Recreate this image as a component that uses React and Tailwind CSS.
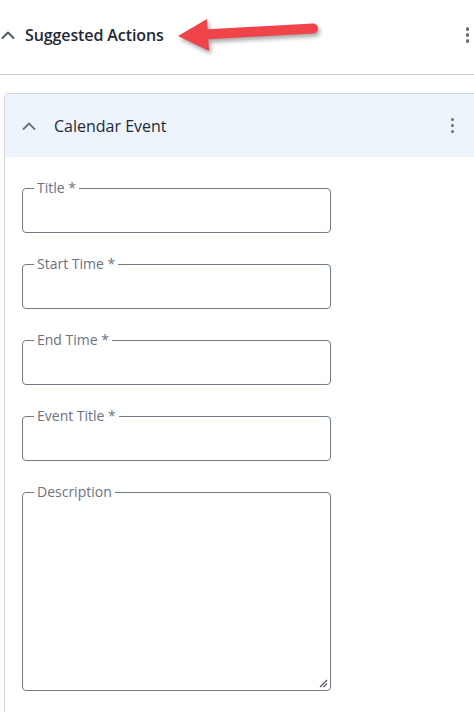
import React from "react";

function Chevron({ className }) {
  return (
    <svg width="14" height="8" viewBox="0 0 14 8" className={className} fill="none">
      <path d="M1.5 7 L7 1.5 L12.5 7" stroke="currentColor" strokeWidth="1.8" strokeLinecap="round" strokeLinejoin="round" />
    </svg>
  );
}

function Kebab({ className }) {
  return (
    <div className={"flex flex-col items-center gap-[2.5px] " + className}>
      <span className="block w-[3.5px] h-[3.5px] rounded-full bg-[#5f6f82]" />
      <span className="block w-[3.5px] h-[3.5px] rounded-full bg-[#5f6f82]" />
      <span className="block w-[3.5px] h-[3.5px] rounded-full bg-[#5f6f82]" />
    </div>
  );
}

function Field({ label, tall }) {
  return (
    <div
      className={
        "relative w-[309px] border border-[#6e7a88] rounded-[4px] " +
        (tall ? "h-[199px]" : "h-[45px]")
      }
    >
      <span className="absolute left-[11px] top-[-9px] px-[3px] bg-white text-[14px] leading-[16px] text-[#6b7280]">
        {label}
      </span>
      {tall && (
        <svg className="absolute right-[2px] bottom-[2px]" width="9" height="9" viewBox="0 0 9 9">
          <path d="M1 8 L8 1 M4.5 8 L8 4.5" stroke="#555" strokeWidth="1.2" />
        </svg>
      )}
    </div>
  );
}

export default function App() {
  return (
    <div
      className="relative w-[474px] h-[712px] overflow-hidden bg-white"
      style={{ fontFamily: '"Open Sans", sans-serif' }}
    >
      <div className="h-[75px] pb-[4px] border-b border-[#c6cbd2] flex items-center">
        <Chevron className="ml-[1px] text-[#4b5563]" />
        <span className="ml-[10px] text-[16px] font-semibold text-[#1f2937] tracking-[-0.1px]">Suggested Actions</span>
        <Kebab className="ml-auto mr-[5px]" />
      </div>

      <div className="ml-[4px] mt-[18px] w-[490px] border border-[#d3d7dd] rounded-tl-[4px]">
        <div className="h-[63px] bg-[#eef4fc] flex items-center">
          <Chevron className="ml-[17px] text-[#6b7280]" />
          <span className="ml-[18px] text-[16px] text-[#1f2937]">Calendar Event</span>
          <Kebab className="ml-[284px]" />
        </div>
        <div className="pl-[17px] pt-[31px] pb-[40px] flex flex-col gap-[31px]">
          <Field label="Title *" />
          <Field label="Start Time *" />
          <Field label="End Time *" />
          <Field label="Event Title *" />
          <Field label="Description" tall />
        </div>
      </div>

      <svg
        className="absolute left-0 top-0 pointer-events-none"
        width="474"
        height="80"
        viewBox="0 0 474 80"
        style={{ filter: "drop-shadow(2px 3px 2px rgba(0,0,0,0.35))" }}
      >
        <line x1="204" y1="34.5" x2="313" y2="28.5" stroke="#f0434a" strokeWidth="10" strokeLinecap="round" />
        <polygon points="178,36 207,19 209,51" fill="#f0434a" />
      </svg>
    </div>
  );
}
